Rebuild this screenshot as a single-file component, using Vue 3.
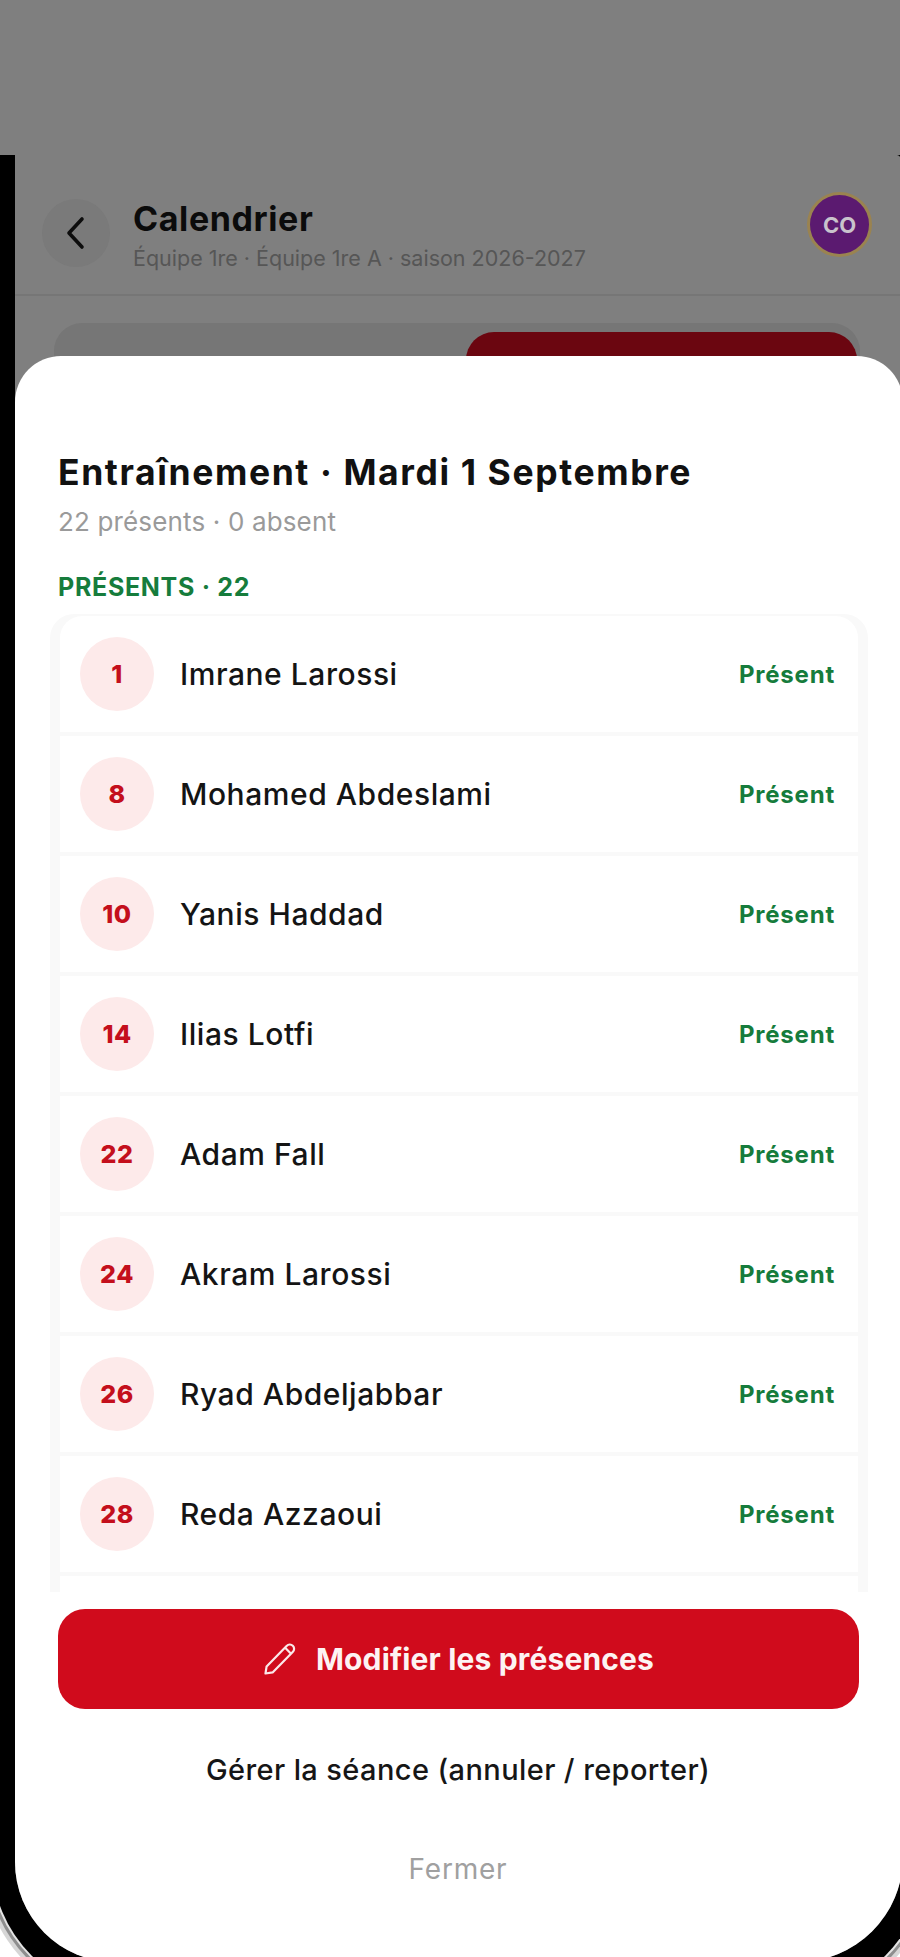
<script setup>
const players = [
  { num: 1, name: "Imrane Larossi" },
  { num: 8, name: "Mohamed Abdeslami" },
  { num: 10, name: "Yanis Haddad" },
  { num: 14, name: "Ilias Lotfi" },
  { num: 22, name: "Adam Fall" },
  { num: 24, name: "Akram Larossi" },
  { num: 26, name: "Ryad Abdeljabbar" },
  { num: 28, name: "Reda Azzaoui" },
];
</script>

<template>
  <div class="stage">
    <div class="top-band"></div>
    <div class="clip">
      <div class="phone">
        <div class="screen">
          <header class="app-head">
            <div class="back">
              <svg width="24" height="34" viewBox="0 0 24 34" fill="none">
                <path d="M18 3 L5 17 L18 31" stroke="#0d0d0d" stroke-width="3.6" stroke-linecap="round" stroke-linejoin="round" />
              </svg>
            </div>
            <div class="head-text">
              <div class="head-title">Calendrier</div>
              <div class="head-sub">Équipe 1re · Équipe 1re A · saison 2026-2027</div>
            </div>
            <div class="avatar">CO</div>
          </header>
          <div class="tabs">
            <div class="tab-active"></div>
          </div>

          <section class="sheet">
            <h1 class="title">Entraînement · Mardi 1 Septembre</h1>
            <p class="summary">22 présents · 0 absent</p>
            <div class="label">PRÉSENTS · 22</div>
            <div class="list">
              <div v-for="p in players" :key="p.num" class="row">
                <div class="num">{{ p.num }}</div>
                <div class="name">{{ p.name }}</div>
                <div class="status">Présent</div>
              </div>
              <div class="row"></div>
            </div>
            <button class="primary">
              <svg width="34" height="34" viewBox="0 0 34 34" fill="none">
                <path d="M2.5 31.5 L3.6 24.4 L23.6 4 C25.4 2.1 28 2 29.8 3.8 C31.6 5.6 31.5 8.2 29.7 10 L9.6 30.4 Z M22.4 6 L27.8 11.6" stroke="#fbe9ea" stroke-width="2.2" stroke-linejoin="round" />
              </svg>
              <span>Modifier les présences</span>
            </button>
            <div class="manage">Gérer la séance (annuler / reporter)</div>
            <div class="close">Fermer</div>
          </section>
        </div>
      </div>
    </div>
  </div>
</template>

<style>
html,
body {
  margin: 0;
  background: #ffffff;
}
</style>

<style scoped>
.stage {
  width: 900px;
  height: 1957px;
  overflow: hidden;
  background: #ffffff;
  font-family: "Inter", "Liberation Sans", sans-serif;
}
.top-band {
  height: 155px;
  background: #7f7f7f;
}
.clip {
  height: 1802px;
  overflow: hidden;
}
.phone {
  box-sizing: border-box;
  width: 933px;
  height: 1840px;
  margin-left: -8px;
  padding-left: 23px;
  background: #000000;
  border-bottom-left-radius: 135px;
  border-bottom-right-radius: 135px;
  box-shadow: 0 0 0 2px #e4e4e4, 0 0 0 5px #8e8e8e, 0 0 0 9px #d6d6d6;
}
.screen {
  position: relative;
  width: 888px;
  height: 1807px;
  overflow: hidden;
  background: #7f7f7f;
  border-top-right-radius: 6px 14px;
  border-bottom-left-radius: 100px;
  border-bottom-right-radius: 105px;
}
.app-head {
  display: flex;
  align-items: center;
  width: 830px;
  height: 139px;
  padding: 0 31px 0 27px;
  border-bottom: 2px solid #767676;
}
.back {
  display: flex;
  align-items: center;
  justify-content: center;
  width: 68px;
  height: 68px;
  margin-top: 16px;
  border-radius: 50%;
  background: #7a7a7a;
}
.head-text {
  flex: 1;
  margin: 20px 0 0 23px;
}
.head-title {
  font-size: 34px;
  line-height: 40px;
  font-weight: 700;
  letter-spacing: 0.6px;
  color: #0b0b0b;
}
.head-sub {
  margin-top: 6px;
  font-size: 21.5px;
  line-height: 26px;
  color: #565656;
}
.avatar {
  display: flex;
  align-items: center;
  justify-content: center;
  box-sizing: border-box;
  width: 65px;
  height: 65px;
  border-radius: 50%;
  border: 3px solid #9a8350;
  background: #5b1a70;
  color: #c9c3cc;
  font-size: 22px;
  font-weight: 700;
}
.tabs {
  box-sizing: border-box;
  width: 806px;
  height: 80px;
  margin: 27px 0 0 39px;
  padding: 9px 3px 0 412px;
  border-radius: 28px 28px 0 0;
  background: #767676;
}
.tab-active {
  height: 71px;
  border-radius: 28px 28px 0 0;
  background: #6b0610;
}
.sheet {
  position: absolute;
  left: 0;
  right: 0;
  top: 201px;
  bottom: 0;
  padding: 0 45px 0 43px;
  background: #ffffff;
  border-radius: 46px 46px 0 0;
}
.title {
  margin: 94px 0 0;
  font-size: 35.5px;
  line-height: 46px;
  font-weight: 700;
  letter-spacing: 1.6px;
  color: #111111;
  white-space: nowrap;
}
.summary {
  margin: 10px 0 0;
  font-size: 26px;
  line-height: 32px;
  letter-spacing: 0.15px;
  color: #9a9a9a;
}
.label {
  margin-top: 34px;
  font-size: 25px;
  line-height: 30px;
  font-weight: 700;
  letter-spacing: 0.7px;
  color: #167c3c;
}
.list {
  box-sizing: border-box;
  width: 818px;
  height: 978px;
  margin: 12px 0 0 -8px;
  padding: 2px 10px 0;
  overflow: hidden;
  background: #f9f9f9;
  border-radius: 24px 24px 0 0;
}
.row {
  box-sizing: border-box;
  display: flex;
  align-items: center;
  height: 116px;
  margin-bottom: 4px;
  padding: 0 23px 0 20px;
  background: #ffffff;
}
.row:first-child {
  border-radius: 22px 22px 0 0;
}
.num {
  display: flex;
  align-items: center;
  justify-content: center;
  width: 74px;
  height: 74px;
  border-radius: 50%;
  background: #fdeaea;
  color: #c40f1c;
  font-size: 25px;
  font-weight: 800;
  letter-spacing: 0.5px;
}
.name {
  flex: 1;
  margin-left: 26px;
  font-size: 30px;
  font-weight: 500;
  letter-spacing: 0.55px;
  color: #141414;
}
.status {
  font-size: 24px;
  font-weight: 700;
  letter-spacing: 0.8px;
  color: #167c3c;
}
.primary {
  display: flex;
  align-items: center;
  justify-content: center;
  gap: 19px;
  width: 801px;
  height: 100px;
  margin-top: 17px;
  padding: 0;
  border: none;
  border-radius: 27px;
  background: #d00b1c;
  color: #fdf3f3;
  font-family: inherit;
  font-size: 30px;
  font-weight: 700;
  letter-spacing: 0.15px;
}
.manage {
  margin-top: 43px;
  text-align: center;
  font-size: 29px;
  line-height: 36px;
  font-weight: 500;
  letter-spacing: 0.4px;
  color: #161616;
}
.close {
  margin-top: 63px;
  text-align: center;
  font-size: 28px;
  line-height: 36px;
  letter-spacing: 0.8px;
  color: #a0a0a0;
}
</style>
